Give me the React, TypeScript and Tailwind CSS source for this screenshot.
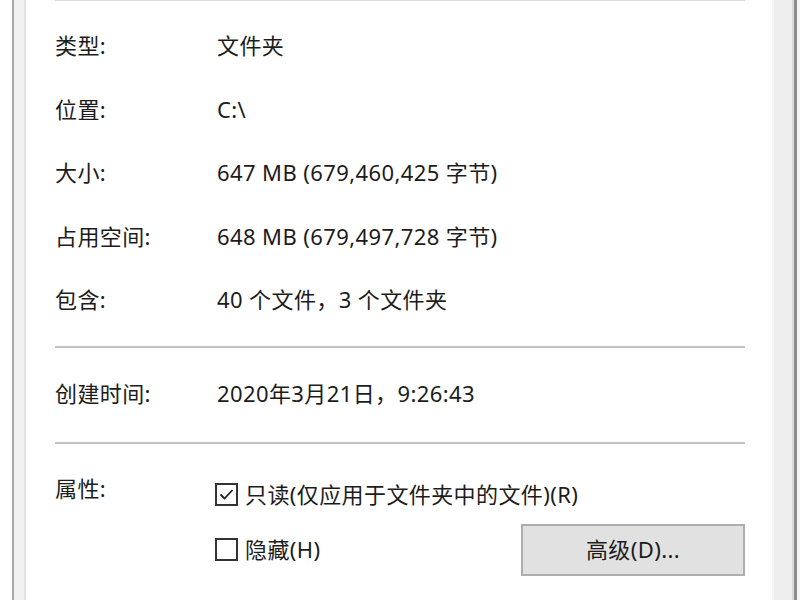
import type { ReactNode } from 'react';

const font = { fontFamily: '"Noto Sans", "Noto Sans CJK SC", sans-serif' };

function Row({ label, children }: { label: string; children: ReactNode }) {
  return (
    <div className="flex items-center h-[63.5px]">
      <div className="w-[162px] shrink-0">{label}</div>
      <div>{children}</div>
    </div>
  );
}

function Checkbox({ checked, label }: { checked?: boolean; label: string }) {
  return (
    <label className="flex items-center gap-[7px]">
      <span className="w-[23px] h-[23px] border-2 border-[#333] bg-white flex items-center justify-center shrink-0">
        {checked && (
          <svg width="17" height="17" viewBox="0 0 17 17" fill="none">
            <path d="M2.5 8.5 L6.5 12.5 L14.5 4" stroke="#222" strokeWidth="1.8" />
          </svg>
        )}
      </span>
      <span>{label}</span>
    </label>
  );
}

export default function App() {
  return (
    <div
      className="w-[800px] h-[600px] bg-white flex overflow-hidden text-[22px] tracking-[0.4px] text-[#1c1c1c]"
      style={font}
    >
      {/* left window frame */}
      <div className="w-[12px] bg-white" />
      <div className="w-[2px] bg-[#a9a9a9]" />
      <div className="w-[10px] bg-[#f0f0f0]" />
      <div className="w-[2px] bg-[#e2e2e2]" />

      {/* dialog content */}
      <div className="flex-1 flex flex-col pl-[29px] pr-[27px]">
        <div className="h-px bg-[#dcdcdc]" />
        <div className="pt-[13px]">
          <Row label="类型:">文件夹</Row>
          <Row label="位置:">C:\</Row>
          <Row label="大小:">647 MB (679,460,425 字节)</Row>
          <Row label="占用空间:">648 MB (679,497,728 字节)</Row>
          <Row label="包含:">40 个文件，3 个文件夹</Row>
        </div>

        <div className="mt-[14px] h-[2px] bg-[#c2c2c2]" />
        <div className="flex items-center h-[94px] pb-[2px]">
          <div className="w-[162px] shrink-0">创建时间:</div>
          <div>2020年3月21日，9:26:43</div>
        </div>
        <div className="h-[2px] bg-[#c2c2c2]" />

        <div className="flex pt-[31px]">
          <div className="w-[160px] shrink-0 h-[28px] flex items-center">属性:</div>
          <div className="flex-1 flex flex-col pt-[6px]">
            <div className="h-[28px] flex items-center">
              <Checkbox checked label="只读(仅应用于文件夹中的文件)(R)" />
            </div>
            <div className="mt-[15px] flex items-center justify-between">
              <Checkbox label="隐藏(H)" />
              <button className="w-[224px] h-[52px] bg-[#e1e1e1] border-2 border-[#adadad] text-[#1c1c1c]">
                高级(D)...
              </button>
            </div>
          </div>
        </div>
      </div>

      {/* right window frame */}
      <div className="w-[2px] bg-[#f7f7f7]" />
      <div className="w-[18px] bg-[#eeeeee]" />
      <div className="w-[2px] bg-[#dadada]" />
      <div className="w-[3px] bg-[#8c8c8c]" />
      <div className="w-[3px] bg-[#f4f4f4]" />
    </div>
  );
}
